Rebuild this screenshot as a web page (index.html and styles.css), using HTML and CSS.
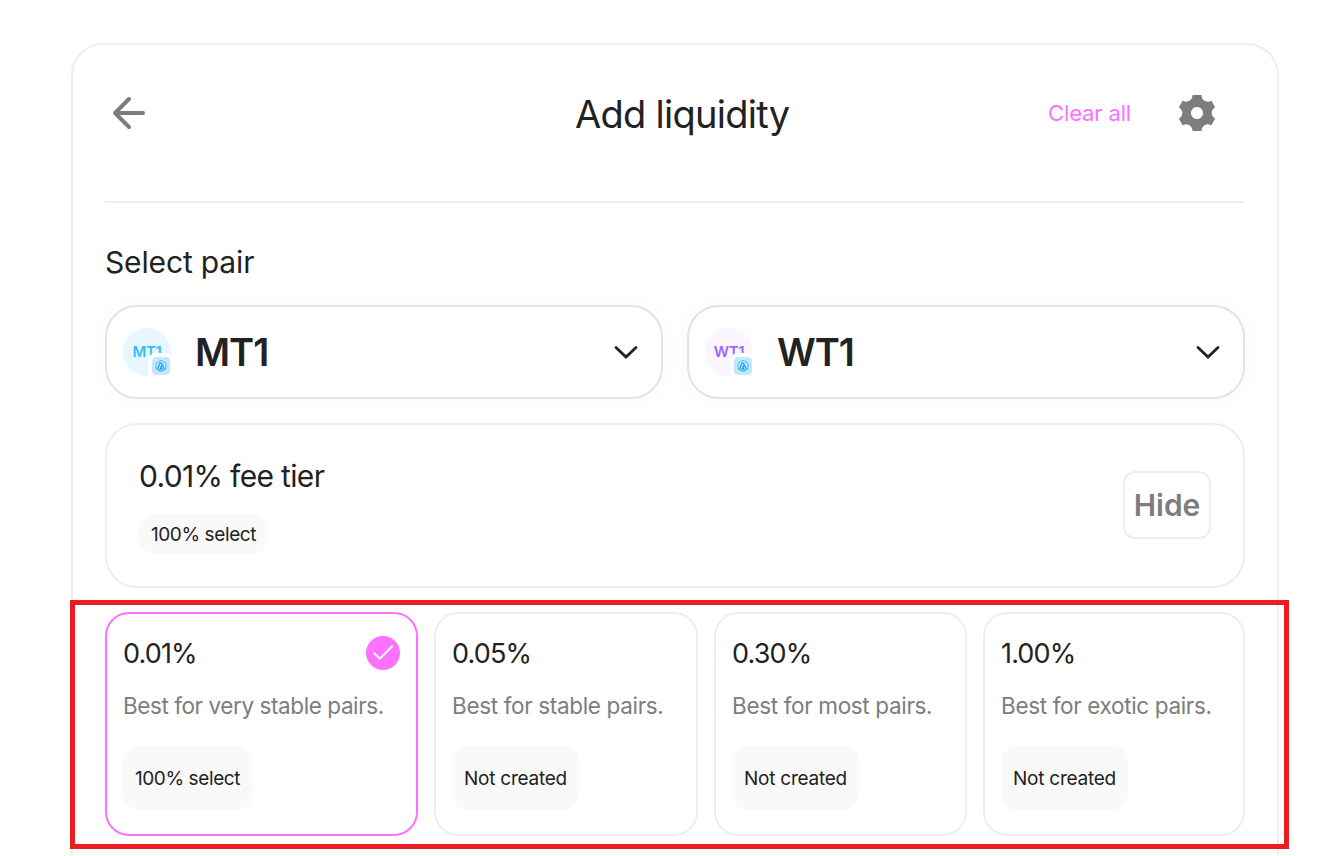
FILE: index.html
```html
<!DOCTYPE html>
<html lang="en">
<head>
<meta charset="utf-8">
<title>Add liquidity</title>
<link rel="stylesheet" href="styles.css">
</head>
<body>
<svg class="defs" width="0" height="0" aria-hidden="true">
  <symbol id="chevron" viewBox="0 0 24 14"><path d="M2 2.500L12 12l10-9.500" fill="none" stroke="currentColor" stroke-width="2.800" stroke-linecap="round" stroke-linejoin="miter"/></symbol>
  <symbol id="network" viewBox="0 0 18 18">
    <rect width="18" height="18" rx="4" fill="#c3e7fb"/>
    <path d="M9 3.400l5 2.800v5.600l-5 2.800-5-2.800V6.200z" fill="none" stroke="#45bdf7" stroke-width="1"/>
    <path d="M5.300 12.400L8 6h1.400l3.300 6.700M7.300 13.700L9.800 8.200M9 10.300l1.500 3.400" fill="none" stroke="#139ff2" stroke-width="1.200"/>
  </symbol>
</svg>
<main class="card">
  <header class="header">
    <button class="icon-btn" aria-label="Back"><svg width="48" height="48" viewBox="0 0 24 24" fill="none" stroke="currentColor" stroke-width="2" stroke-linecap="round" stroke-linejoin="round"><path d="M19 12H5M12 19l-7-7 7-7"/></svg></button>
    <h1 class="title">Add liquidity</h1>
    <div class="actions">
      <button class="clear">Clear all</button>
      <button class="icon-btn" aria-label="Settings"><svg width="48" height="48" viewBox="0 0 24 24" fill="currentColor"><path d="M20.830 14.600C19.900 14.060 19.330 13.070 19.330 12C19.330 10.930 19.900 9.940 20.830 9.400C20.990 9.300 21.050 9.100 20.950 8.940L19.280 6.060C19.220 5.950 19.110 5.890 19 5.890C18.940 5.890 18.880 5.910 18.830 5.940C18.370 6.200 17.850 6.340 17.330 6.340C16.800 6.340 16.280 6.200 15.810 5.930C14.880 5.390 14.310 4.410 14.310 3.340C14.310 3.150 14.160 3 13.980 3H10.020C9.840 3 9.690 3.150 9.690 3.340C9.690 4.410 9.120 5.390 8.190 5.930C7.720 6.200 7.200 6.340 6.670 6.340C6.150 6.340 5.630 6.200 5.170 5.940C5.010 5.840 4.810 5.900 4.720 6.060L3.040 8.940C3.010 8.990 3 9.050 3 9.100C3 9.220 3.060 9.330 3.170 9.400C4.100 9.940 4.670 10.920 4.670 11.990C4.670 13.070 4.100 14.060 3.180 14.600H3.170C3.010 14.700 2.950 14.900 3.050 15.060L4.720 17.940C4.780 18.050 4.890 18.110 5 18.110C5.060 18.110 5.120 18.090 5.170 18.060C6.110 17.530 7.260 17.530 8.190 18.070C9.110 18.610 9.680 19.590 9.680 20.660C9.680 20.850 9.830 21 10.020 21H13.980C14.160 21 14.310 20.850 14.310 20.660C14.310 19.590 14.880 18.610 15.810 18.070C16.280 17.800 16.800 17.660 17.330 17.660C17.850 17.660 18.370 17.800 18.830 18.060C18.990 18.160 19.190 18.100 19.280 17.940L20.960 15.060C20.990 15.010 21 14.950 21 14.900C21 14.780 20.940 14.670 20.830 14.600ZM12 15C10.340 15 9 13.660 9 12C9 10.340 10.340 9 12 9C13.660 9 15 10.340 15 12C15 13.660 13.660 15 12 15Z"/></svg></button>
    </div>
  </header>
  <section class="body">
    <h2 class="section-title">Select pair</h2>
    <div class="pair">
      <button class="token">
        <span class="logo logo-mt">MT1<svg class="network"><use href="#network"/></svg></span>
        <span class="symbol">MT1</span>
        <svg class="chevron"><use href="#chevron"/></svg>
      </button>
      <button class="token">
        <span class="logo logo-wt">WT1<svg class="network"><use href="#network"/></svg></span>
        <span class="symbol">WT1</span>
        <svg class="chevron"><use href="#chevron"/></svg>
      </button>
    </div>
    <div class="fee">
      <div class="fee-info">
        <div class="fee-title">0.01% fee tier</div>
        <span class="chip chip-select">100% select</span>
      </div>
      <button class="hide">Hide</button>
    </div>
    <div class="tiers">
      <article class="tier selected">
        <div class="tier-top"><span class="rate">0.01%</span><svg class="check" viewBox="0 0 34 34"><circle cx="17" cy="17" r="17" fill="#fc72ff"/><path d="M8.200 17.200l5.600 5.400L26.200 10.200" fill="none" stroke="#fff" stroke-width="2" stroke-linecap="round" stroke-linejoin="round"/></svg></div>
        <p class="desc">Best for very stable pairs.</p>
        <span class="chip chip-tall chip-select">100% select</span>
      </article>
      <article class="tier">
        <div class="tier-top"><span class="rate">0.05%</span></div>
        <p class="desc desc-short">Best for stable pairs.</p>
        <span class="chip chip-tall chip-none">Not created</span>
      </article>
      <article class="tier">
        <div class="tier-top"><span class="rate">0.30%</span></div>
        <p class="desc desc-short">Best for most pairs.</p>
        <span class="chip chip-tall chip-none">Not created</span>
      </article>
      <article class="tier">
        <div class="tier-top"><span class="rate">1.00%</span></div>
        <p class="desc desc-short">Best for exotic pairs.</p>
        <span class="chip chip-tall chip-none">Not created</span>
      </article>
    </div>
  </section>
</main>
<div class="highlight"></div>
</body>
</html>
```
FILE: styles.css
```css
* { box-sizing: border-box; }
body {
  margin: 0;
  padding: 43px 42px 0 71px;
  background: #fff;
  color: #222;
  font-family: Inter, "Liberation Sans", sans-serif;
}
button { font: inherit; color: inherit; background: none; border: 0; padding: 0; }
h1, h2, p { margin: 0; font-weight: inherit; }
svg { display: block; flex: none; }
.defs { position: absolute; }
.card {
  height: 813px;
  border: 2px solid #eee;
  border-bottom: 0;
  border-radius: 32px 32px 0 0;
  padding: 0 32px;
  font-weight: 440;
}
.header {
  height: 158px;
  padding: 0 24px 20px 0;
  border-bottom: 2px solid #eee;
  display: grid;
  grid-template-columns: 470px auto 1fr;
  align-items: center;
}
.icon-btn { width: 48px; height: 48px; color: #7d7d7d; }
.title { font-size: 38px; line-height: 48px; letter-spacing: -0.720px; padding-top: 1px; white-space: nowrap; }
.actions { display: flex; justify-content: flex-end; align-items: center; gap: 42px; }
.clear { font-size: 22px; color: #fc72ff; letter-spacing: -0.150px; }
.body { padding-top: 39px; }
.section-title { font-size: 30px; line-height: 40px; height: 63px; letter-spacing: -0.150px; }
.pair { display: grid; grid-template-columns: 1fr 1fr; gap: 24px; }
.token {
  height: 94px;
  display: flex;
  align-items: center;
  padding: 0 23px 0 16px;
  border: 2px solid #e3e3e3;
  border-radius: 32px;
  background: #fff;
  box-shadow: 0 0 20px rgba(0, 0, 0, 0.03);
  text-align: left;
}
.logo {
  position: relative;
  width: 48px;
  height: 48px;
  border-radius: 50%;
  font-size: 15px;
  line-height: 48px;
  font-weight: 600;
  letter-spacing: -0.3px;
  text-align: center;
}
.logo-mt { background: #e8f7ff; color: #36bdf8; }
.logo-wt { background: #faf5ff; color: #a168f5; }
.network {
  position: absolute;
  left: 25px;
  top: 25px;
  width: 26px;
  height: 26px;
  padding: 4px;
  border-radius: 8px;
  background: #fff;
}
.symbol { flex: 1; font-size: 38px; font-weight: 600; margin: 0 0 0 24px; letter-spacing: -1px; }
.chevron { width: 24px; height: 14px; }
.fee {
  height: 165px;
  margin-top: 24px;
  padding: 0 32px;
  display: flex;
  align-items: center;
  justify-content: space-between;
  border: 2px solid #eee;
  border-radius: 32px;
}
.fee-info { display: flex; flex-direction: column; align-items: flex-start; gap: 18px; margin-top: -1px; }
.fee-title { font-size: 30px; line-height: 40px; letter-spacing: -0.660px; }
.chip {
  height: 40px;
  display: flex;
  align-items: center;
  justify-content: center;
  border-radius: 16px;
  background: #f9f9f9;
  font-size: 19px;
  white-space: nowrap;
}
.chip-select { width: 129px; letter-spacing: -0.4px; }
.chip-none { width: 127px; letter-spacing: -0.25px; }
.chip-tall { height: 64px; }
.hide {
  width: 88px;
  height: 68px;
  margin-top: -1px;
  border: 2px solid #eee;
  border-radius: 12px;
  color: #7d7d7d;
  font-size: 30px;
  font-weight: 600;
}
.tiers {
  margin-top: 24px;
  display: grid;
  grid-template-columns: 313px 264px 253px 262px;
  gap: 16px;
}
.tier { height: 224px; padding: 22px 16px; border: 2px solid #eee; border-radius: 24px; }
.selected { border-color: #fc72ff; }
.tier-top { height: 34px; display: flex; align-items: center; justify-content: space-between; }
.rate { font-size: 27px; letter-spacing: -0.850px; padding-top: 1px; }
.desc { margin: 20px 0 24px; font-size: 22.500px; line-height: 32px; letter-spacing: -0.420px; color: #7d7d7d; white-space: nowrap; }
.desc-short { letter-spacing: -0.340px; }
.check { width: 34px; height: 34px; }
/* Annotation frame around the fee options */
.highlight {
  position: absolute;
  left: 70px;
  top: 600px;
  width: 1219px;
  height: 249px;
  border: 5px solid #ed1c24;
}
```
